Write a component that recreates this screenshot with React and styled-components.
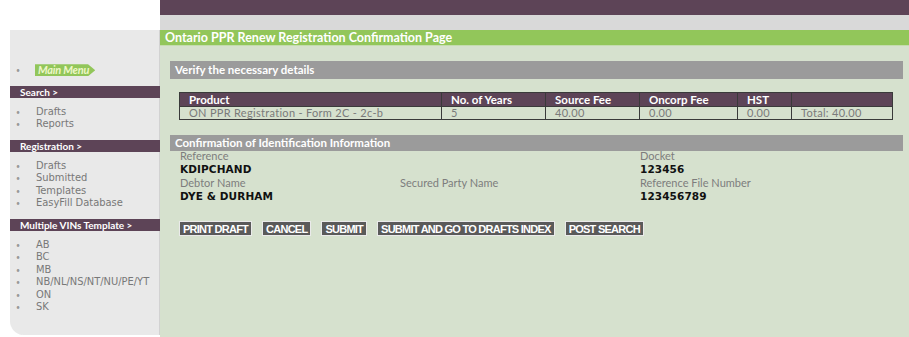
import React from 'react';
import styled, { createGlobalStyle } from 'styled-components';

const colors = {
  purple: '#5d4457',
  band: '#d9d9d9',
  green: '#92c65a',
  content: '#d6e1ce',
  bar: '#9b9b9b',
  side: '#e9e9e9',
  link: '#787878',
  button: '#5a5a5a',
};

const GlobalStyle = createGlobalStyle`
  body {
    margin: 0;
    background: #ffffff;
    font-family: Lato, "Open Sans", sans-serif;
  }
`;

const sideSections = [
  { title: 'Search >', items: ['Drafts', 'Reports'] },
  { title: 'Registration >', items: ['Drafts', 'Submitted', 'Templates', 'EasyFill Database'] },
  { title: 'Multiple VINs Template >', items: ['AB', 'BC', 'MB', 'NB/NL/NS/NT/NU/PE/YT', 'ON', 'SK'] },
];

const columns = [
  { head: 'Product', value: 'ON PPR Registration - Form 2C - 2c-b', width: 262 },
  { head: 'No. of Years', value: '5', width: 104 },
  { head: 'Source Fee', value: '40.00', width: 94 },
  { head: 'Oncorp Fee', value: '0.00', width: 98 },
  { head: 'HST', value: '0.00', width: 54 },
  { head: '', value: 'Total: 40.00' },
];

const buttons = ['PRINT DRAFT', 'CANCEL', 'SUBMIT', 'SUBMIT AND GO TO DRAFTS INDEX', 'POST SEARCH'];

const App = () => {
  return (
    <>
      <GlobalStyle />
      <StyledPage>
        <StyledTopLeft />
        <StyledTop>
          <StyledTopBar />
          <StyledBand />
        </StyledTop>

        <StyledSidebar>
          <StyledItem>
            <StyledBullet>•</StyledBullet>
            <StyledMainMenu>Main Menu</StyledMainMenu>
          </StyledItem>
          {sideSections.map((section) => (
            <StyledSection key={section.title}>
              <StyledSideHead>{section.title}</StyledSideHead>
              <StyledList>
                {section.items.map((item) => (
                  <StyledItem key={item}>
                    <StyledBullet>•</StyledBullet>
                    <StyledLink>{item}</StyledLink>
                  </StyledItem>
                ))}
              </StyledList>
            </StyledSection>
          ))}
        </StyledSidebar>

        <StyledMain>
          <StyledTitle>Ontario PPR Renew Registration Confirmation Page</StyledTitle>
          <StyledContent>
            <StyledBar>Verify the necessary details</StyledBar>
            <StyledTable>
              <colgroup>
                {columns.map((col, i) => (
                  <col key={i} style={col.width ? { width: col.width } : undefined} />
                ))}
              </colgroup>
              <thead>
                <tr>
                  {columns.map((col, i) => (
                    <StyledTh key={i}>{col.head}</StyledTh>
                  ))}
                </tr>
              </thead>
              <tbody>
                <tr>
                  {columns.map((col, i) => (
                    <StyledTd key={i}>{col.value}</StyledTd>
                  ))}
                </tr>
              </tbody>
            </StyledTable>

            <StyledBar $thin>Confirmation of Identification Information</StyledBar>
            <StyledInfo>
              <StyledLabel>Reference</StyledLabel>
              <span />
              <StyledLabel>Docket</StyledLabel>
              <StyledValue>KDIPCHAND</StyledValue>
              <span />
              <StyledValue>123456</StyledValue>
              <StyledLabel>Debtor Name</StyledLabel>
              <StyledLabel>Secured Party Name</StyledLabel>
              <StyledLabel>Reference File Number</StyledLabel>
              <StyledValue>DYE &amp; DURHAM</StyledValue>
              <span />
              <StyledValue>123456789</StyledValue>
            </StyledInfo>

            <StyledButtons>
              {buttons.map((b) => (
                <StyledButton key={b}>{b}</StyledButton>
              ))}
            </StyledButtons>
          </StyledContent>
        </StyledMain>
      </StyledPage>
    </>
  );
};

const StyledPage = styled.div`
  display: grid;
  grid-template-columns: 160px 749px;
  grid-template-rows: 30px 307px;
  width: 909px;
  height: 337px;
  overflow: hidden;
`;

const StyledTopLeft = styled.div`
  background: #ffffff;
`;

const StyledTop = styled.div`
  display: flex;
  flex-direction: column;
`;

const StyledTopBar = styled.div`
  height: 15px;
  background: ${colors.purple};
`;

const StyledBand = styled.div`
  height: 15px;
  background: ${colors.band};
`;

const StyledSidebar = styled.div`
  margin-left: 10px;
  height: 305px;
  padding-top: 34px;
  box-sizing: border-box;
  background: ${colors.side};
  border-bottom-left-radius: 14px;
  box-shadow: inset -1px 0 0 #d2d2d2;
  overflow: hidden;
`;

const StyledSection = styled.div`
  margin-top: 9px;
`;

const StyledSideHead = styled.div`
  height: 12px;
  line-height: 12px;
  padding-left: 10px;
  background: ${colors.purple};
  color: #ffffff;
  font-size: 10px;
  font-weight: 700;
`;

const StyledList = styled.div`
  padding-top: 8px;
`;

const StyledItem = styled.div`
  display: flex;
  align-items: center;
  height: 12.5px;
  white-space: nowrap;
`;

const StyledBullet = styled.span`
  flex: 0 0 26px;
  padding-left: 6px;
  box-sizing: border-box;
  color: #999;
  font-size: 7px;
`;

const StyledLink = styled.span`
  color: ${colors.link};
  font-family: "DejaVu Sans", sans-serif;
  font-stretch: condensed;
  font-size: 11px;
  line-height: 12px;
`;

const StyledMainMenu = styled.span`
  height: 12px;
  line-height: 12px;
  padding: 0 6px 0 3px;
  margin-left: -1px;
  background: ${colors.green};
  color: #eef7c8;
  font-size: 11px;
  font-weight: 700;
  font-style: italic;
  letter-spacing: -0.2px;
  clip-path: polygon(0 0, 88% 0, 100% 50%, 88% 100%, 0 100%);
`;

const StyledMain = styled.div`
  display: flex;
  flex-direction: column;
  background: ${colors.content};
`;

const StyledTitle = styled.div`
  height: 15px;
  line-height: 15px;
  padding-left: 5px;
  background: ${colors.green};
  color: #ffffff;
  font-size: 12.5px;
  font-weight: 700;
  border-bottom: 1px solid #c4dcae;
`;

const StyledContent = styled.div`
  padding: 15px 6px 0 10px;
`;

const StyledBar = styled.div`
  height: ${(p) => (p.$thin ? 16 : 18)}px;
  line-height: ${(p) => (p.$thin ? 16 : 18)}px;
  padding-left: 5px;
  background: ${colors.bar};
  color: #ffffff;
  font-size: 11.5px;
  font-weight: 700;
`;

const StyledTable = styled.table`
  width: 714px;
  margin: 13px 0 15px 9px;
  border-collapse: collapse;
  table-layout: fixed;
  border: 1px solid #3a3a3a;
`;

const StyledTh = styled.th`
  height: 13px;
  padding: 0 0 0 9px;
  background: ${colors.purple};
  color: #ffffff;
  font-size: 11.5px;
  font-weight: 700;
  line-height: 12px;
  text-align: left;
  border: 1px solid #3a3a3a;
`;

const StyledTd = styled.td`
  height: 12px;
  padding: 0 0 0 9px;
  color: #7a7a7a;
  font-size: 11px;
  line-height: 12px;
  letter-spacing: 0.3px;
  border: 1px solid #3a3a3a;
`;

const StyledInfo = styled.div`
  display: grid;
  grid-template-columns: 220px 240px 1fr;
  padding-left: 10px;
  margin-top: -1px;
`;

const StyledLabel = styled.div`
  height: 12px;
  line-height: 12px;
  color: #7d7d7d;
  font-size: 11px;
`;

const StyledValue = styled.div`
  height: 15px;
  line-height: 15px;
  color: #111111;
  font-family: "DejaVu Sans", sans-serif;
  font-size: 10.5px;
  font-weight: 700;
  letter-spacing: 0.1px;
`;

const StyledButtons = styled.div`
  display: flex;
  gap: 10px;
  margin: 17px 0 0 9px;
`;

const StyledButton = styled.button`
  height: 15px;
  margin: 0;
  padding: 0 3px;
  border: 1px solid #eaeaea;
  background: ${colors.button};
  color: #ffffff;
  font-family: "Liberation Sans", sans-serif;
  font-size: 11px;
  font-weight: 700;
  line-height: 12px;
  letter-spacing: -0.75px;
  cursor: pointer;
`;

export default App;
